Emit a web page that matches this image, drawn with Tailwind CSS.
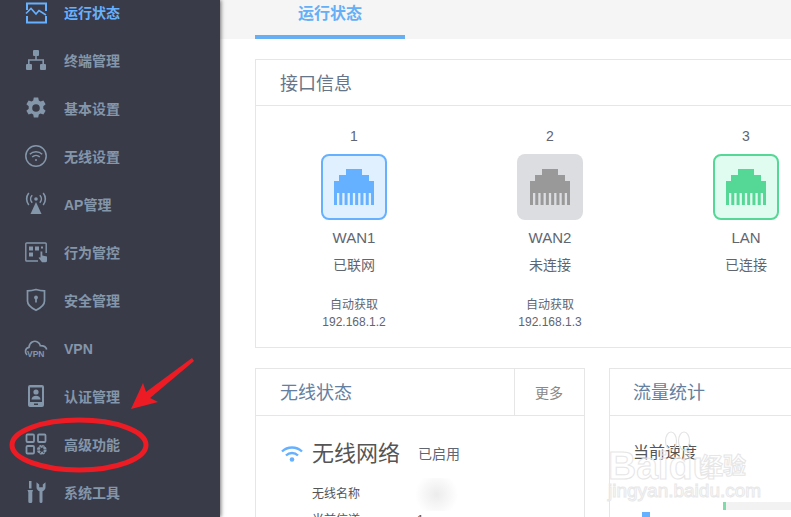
<!DOCTYPE html>
<html lang="zh-CN">
<head>
  <meta charset="UTF-8" />
  <title>运行状态</title>
  <script src="https://cdn.jsdelivr.net/npm/@tailwindcss/browser@4"></script>
</head>
<body class="font-['Liberation_Sans','Noto_Sans_CJK_SC',sans-serif] bg-white">
  <div class="relative flex w-[791px] h-[517px] overflow-hidden">

    <!-- sidebar -->
    <aside class="relative z-10 w-[220px] h-full shrink-0 bg-[#3a3b48] shadow-[1px_0_4px_rgba(0,0,0,0.55)] text-[14px] font-bold text-[#8496aa]">
      <ul class="-mt-[12px]">
        <li class="flex items-center h-[48px] pl-[24px] gap-[16px] text-[#66b1ff]">
          <svg class="w-[24px] h-[24px] overflow-visible" viewBox="0 0 24 24" fill="none" stroke="currentColor" stroke-width="2"><path d="M3 10V3.500h19V11M3 16v6.500h19V16"/><path d="M2 13.500l5-5 5 5.500 3-3.500 7 4.500" stroke-width="1.600"/></svg>
          <span class="pt-[2px]">运行状态</span>
        </li>
        <li class="flex items-center h-[48px] pl-[24px] gap-[16px]">
          <svg class="w-[24px] h-[24px]" viewBox="0 0 24 24" fill="currentColor"><rect x="9" y="2" width="6" height="6" rx="1"/><rect x="2" y="16" width="6" height="6" rx="1"/><rect x="16" y="16" width="6" height="6" rx="1"/><path d="M11.200 8h1.600v3.200H20V16h-1.600v-3.200H5.600V16H4v-4.800h7.200z"/></svg>
          <span class="pt-[2px]">终端管理</span>
        </li>
        <li class="flex items-center h-[48px] pl-[24px] gap-[16px]">
          <svg class="w-[24px] h-[24px]" viewBox="0 0 24 24" fill="currentColor"><path fill-rule="evenodd" d="M9.800 1.500h4.400l.6 3 1.700 1 2.900-1 2.200 3.800-2.300 2v2.400l2.300 2-2.200 3.800-2.900-1-1.700 1-.6 3H9.800l-.6-3-1.700-1-2.900 1-2.200-3.800 2.300-2v-2.400l-2.300-2 2.200-3.800 2.900 1 1.700-1zM12 8.200a3.800 3.800 0 1 0 0 7.600 3.800 3.800 0 0 0 0-7.600z"/></svg>
          <span class="pt-[2px]">基本设置</span>
        </li>
        <li class="flex items-center h-[48px] pl-[24px] gap-[16px]">
          <svg class="w-[24px] h-[24px]" viewBox="0 0 24 24" fill="none" stroke="currentColor" stroke-width="1.500"><circle cx="12" cy="12" r="10.200"/><path d="M5.800 10.200a9 9 0 0 1 12.400 0M8.200 13a5.600 5.600 0 0 1 7.600 0"/><circle cx="12" cy="16" r="1" fill="currentColor" stroke="none"/></svg>
          <span class="pt-[2px]">无线设置</span>
        </li>
        <li class="flex items-center h-[48px] pl-[24px] gap-[16px]">
          <svg class="w-[24px] h-[24px]" viewBox="0 0 24 24" fill="currentColor"><path d="M12 10l5.500 12h-11z"/><circle cx="12" cy="7" r="1.800"/><path d="M8.200 3.200a5.500 5.500 0 0 0 0 7.600M15.800 3.200a5.500 5.500 0 0 1 0 7.600M4.800 1a9.500 9.500 0 0 0 0 12M19.200 1a9.500 9.500 0 0 1 0 12" fill="none" stroke="currentColor" stroke-width="1.600"/></svg>
          <span class="pt-[2px]">AP管理</span>
        </li>
        <li class="flex items-center h-[48px] pl-[24px] gap-[16px]">
          <svg class="w-[24px] h-[24px]" viewBox="0 0 24 24" fill="currentColor"><path d="M14 21H2.600a.8.8 0 0 1-.8-.8V3.800a.8.8 0 0 1 .8-.8h18.800a.8.8 0 0 1 .8.8V13" fill="none" stroke="currentColor" stroke-width="1.400"/><rect x="5" y="6.500" width="4" height="4"/><rect x="11" y="6.500" width="4" height="4"/><rect x="5" y="12.500" width="4" height="4"/><rect x="17" y="6.500" width="2" height="2"/><path d="M16.500 11.500h1.800v4l4.700.9v4.400a1.500 1.500 0 0 1-1.500 1.500h-3.500l-3.500-4.500 1.500-.6.500.6z"/></svg>
          <span class="pt-[2px]">行为管控</span>
        </li>
        <li class="flex items-center h-[48px] pl-[24px] gap-[16px]">
          <svg class="w-[24px] h-[24px]" viewBox="0 0 24 24" fill="none" stroke="currentColor" stroke-width="1.700"><path d="M12 1.500c3.200 1 6 1.400 8.500 1.400v10.100c0 4-3.800 7-8.500 9.200-4.700-2.200-8.500-5.200-8.500-9.200V2.900c2.500 0 5.300-.4 8.500-1.400z"/><circle cx="12" cy="9.500" r="1.900" fill="currentColor" stroke="none"/><path d="M12 10v4.500"/></svg>
          <span class="pt-[2px]">安全管理</span>
        </li>
        <li class="flex items-center h-[48px] pl-[24px] gap-[16px]">
          <span class="relative w-[24px] h-[24px]">
            <svg class="w-[24px] h-[24px]" viewBox="0 0 24 24" fill="none" stroke="currentColor" stroke-width="1.700"><path d="M3 19C.5 16.500 1 12 5 11.300 5.500 6.500 10 4 13.500 6c1.500.8 2.500 2.200 2.800 3.700 3 0 5.600 1 6.400 3.800"/></svg>
            <span class="absolute left-[3px] top-[13px] text-[8.500px] leading-[10px] font-bold">VPN</span>
          </span>
          <span class="pt-[2px]">VPN</span>
        </li>
        <li class="flex items-center h-[48px] pl-[24px] gap-[16px]">
          <svg class="w-[24px] h-[24px]" viewBox="0 0 24 24" fill="currentColor"><path fill-rule="evenodd" d="M6 1h12a2 2 0 0 1 2 2v18a2 2 0 0 1-2 2H6a2 2 0 0 1-2-2V3a2 2 0 0 1 2-2zm0 2.500v14.500h12V3.500zM10 19.500v1.600h4v-1.600z"/><circle cx="12" cy="8" r="2.600"/><path d="M7.500 15.500c0-2.500 2-3.800 4.500-3.800s4.500 1.300 4.500 3.800z"/></svg>
          <span class="pt-[2px]">认证管理</span>
        </li>
        <li class="flex items-center h-[48px] pl-[24px] gap-[16px]">
          <svg class="w-[24px] h-[24px]" viewBox="0 0 24 24" fill="none" stroke="currentColor" stroke-width="1.800"><rect x="2.500" y="2.500" width="7.500" height="7.500" rx="1"/><rect x="14" y="2.500" width="7.500" height="7.500" rx="1"/><rect x="2.500" y="14" width="7.500" height="7.500" rx="1"/><circle cx="17.800" cy="17.800" r="3.200" stroke-width="2.400" stroke-dasharray="2.500 .8"/><circle cx="17.800" cy="17.800" r="4.200" stroke-width="1.200" stroke-dasharray="2 1.300"/></svg>
          <span class="pt-[2px]">高级功能</span>
        </li>
        <li class="flex items-center h-[48px] pl-[24px] gap-[16px]">
          <svg class="w-[24px] h-[24px]" viewBox="0 0 24 24" fill="currentColor"><path d="M5 1h2.500v7.500H5zM3.500 10h5.500l-.7 2.200v9.300a1.500 1.500 0 0 1-1.500 1.500h-1a1.500 1.500 0 0 1-1.500-1.500v-9.300z"/><path d="M12.500 2.200v5c0 2 1.500 3.500 3 4v10.300a1.500 1.500 0 0 0 3 0V11.200c1.500-.5 3-2 3-4v-5l-2.700 2.300v2.700h-3.600V4.500z"/></svg>
          <span class="pt-[2px]">系统工具</span>
        </li>
      </ul>
    </aside>

    <!-- main -->
    <main class="flex-1 min-w-0">
      <div class="h-[39px] bg-[#f5f5f5] pl-[35px]">
        <div class="w-[150px] h-[39px] border-b-4 border-[#66aff5] text-center text-[16px] leading-[27px] font-bold text-[#66aff5]">运行状态</div>
      </div>

      <div class="pl-[35px] pt-[20px] w-[780px]">
        <!-- 接口信息 -->
        <section class="w-[720px] h-[289px] border border-[#e6e6e6]">
          <h2 class="h-[46px] border-b border-[#e6e6e6] pl-[24px] text-[18px] leading-[49px] font-normal text-[#65758a]">接口信息</h2>
          <div class="flex pt-[20px]">
            <div class="flex flex-col items-center w-[196px] text-[#5f6671]">
              <div class="text-[14px] leading-[20px]">1</div>
              <div class="flex items-center justify-center w-[66px] h-[66px] mt-[8px] rounded-lg border-2 border-[#66b1ff] bg-[#e1f0ff]">
                <svg class="w-[40px] h-[36px]" viewBox="0 0 40 36" fill="#66b1ff"><path d="M12 0H28V6H35V12H40V24H0V12H5V6H12Z"/><path d="M0 30H40" stroke="#66b1ff" stroke-width="12" stroke-dasharray="3 2.290"/></svg>
              </div>
              <div class="mt-[8px] text-[15px] leading-[20px]">WAN1</div>
              <div class="mt-[7px] text-[14px] leading-[20px]">已联网</div>
              <div class="mt-[22px] text-[12px] leading-[17px]">自动获取</div>
              <div class="text-[12px] leading-[17px]">192.168.1.2</div>
            </div>
            <div class="flex flex-col items-center w-[196px] text-[#5f6671]">
              <div class="text-[14px] leading-[20px]">2</div>
              <div class="flex items-center justify-center w-[66px] h-[66px] mt-[8px] rounded-lg bg-[#dcdde0]">
                <svg class="w-[40px] h-[36px]" viewBox="0 0 40 36" fill="#999999"><path d="M12 0H28V6H35V12H40V24H0V12H5V6H12Z"/><path d="M0 30H40" stroke="#999999" stroke-width="12" stroke-dasharray="3 2.290"/></svg>
              </div>
              <div class="mt-[8px] text-[15px] leading-[20px]">WAN2</div>
              <div class="mt-[7px] text-[14px] leading-[20px]">未连接</div>
              <div class="mt-[22px] text-[12px] leading-[17px]">自动获取</div>
              <div class="text-[12px] leading-[17px]">192.168.1.3</div>
            </div>
            <div class="flex flex-col items-center w-[196px] text-[#5f6671]">
              <div class="text-[14px] leading-[20px]">3</div>
              <div class="flex items-center justify-center w-[66px] h-[66px] mt-[8px] rounded-lg border-2 border-[#55d795] bg-[#e0fbf0]">
                <svg class="w-[40px] h-[36px]" viewBox="0 0 40 36" fill="#55d795"><path d="M12 0H28V6H35V12H40V24H0V12H5V6H12Z"/><path d="M0 30H40" stroke="#55d795" stroke-width="12" stroke-dasharray="3 2.290"/></svg>
              </div>
              <div class="mt-[8px] text-[15px] leading-[20px]">LAN</div>
              <div class="mt-[7px] text-[14px] leading-[20px]">已连接</div>
            </div>
          </div>
        </section>

        <div class="flex gap-[24px] mt-[20px]">
          <!-- 无线状态 -->
          <section class="w-[330px] h-[300px] shrink-0 border border-[#e6e6e6]">
            <div class="flex h-[47px] border-b border-[#e6e6e6]">
              <h2 class="flex-1 pl-[24px] text-[18px] leading-[49px] font-normal text-[#65809f]">无线状态</h2>
              <div class="w-[70px] border-l border-[#e6e6e6] pl-[20px] text-[14px] leading-[48px] text-[#888888]">更多</div>
            </div>
            <div class="flex items-center pl-[25px] pt-[22px]">
              <svg class="w-[22px] h-[16px]" viewBox="0 0 22 16" fill="none" stroke="#66b1ff" stroke-width="2.400"><path d="M1 5.500a14.500 14.500 0 0 1 20 0M5 9.500a8.500 8.500 0 0 1 12 0"/><circle cx="11" cy="13.500" r="2.300" fill="#66b1ff" stroke="none"/></svg>
              <span class="ml-[9px] text-[22px] leading-[32px] text-[#555555]">无线网络</span>
              <span class="ml-[18px] text-[14px] leading-[20px] text-[#5f6671]">已启用</span>
            </div>
            <div class="flex items-center mt-[16px] pl-[56px] h-[17px]">
              <span class="w-[101px] text-[12px] leading-[17px] text-[#555555]">无线名称</span>
              <span class="w-[47px] h-[33px] bg-[radial-gradient(circle,#ececec,#ffffff_75%)]"></span>
            </div>
            <div class="flex mt-[9px] pl-[56px] text-[12px] leading-[17px] text-[#555555]">
              <span class="w-[105px]">当前信道</span>
              <span>1</span>
            </div>
          </section>

          <!-- 流量统计 -->
          <section class="w-[330px] h-[300px] shrink-0 border border-[#e6e6e6]">
            <h2 class="h-[47px] border-b border-[#e6e6e6] pl-[23px] text-[18px] leading-[49px] font-normal text-[#65809f]">流量统计</h2>
            <div class="pl-[23px] pt-[25px] text-[16px] leading-[24px] text-[#555555]">当前速度</div>
            <div class="relative h-[30px] mt-[37px]">
              <div class="absolute left-[32px] top-[10px] w-[8px] h-[10px] bg-[#66b1ff]"></div>
              <div class="absolute left-[113px] top-0 w-[3px] h-[8px] bg-[#7fdcaa]"></div>
              <div class="absolute left-[116px] top-0 w-[200px] h-[8px] bg-[#f2f2f2]"></div>
            </div>
          </section>
        </div>
      </div>
    </main>

    <!-- 水印 -->
    <div class="absolute left-[606px] top-[428px] z-20 w-[150px] h-[80px] pointer-events-none">
      <svg class="absolute left-[58px] top-[3px] w-[28px] h-[22px]" viewBox="0 0 28 22" fill="none" stroke="#e4e4e4" stroke-width="1.200"><ellipse cx="7" cy="10" rx="5.500" ry="9"/><ellipse cx="20" cy="10" rx="5.500" ry="9"/></svg>
      <span class="absolute left-[2px] top-[16px] text-[39px] leading-[44px] font-bold text-white/40 [-webkit-text-stroke:1px_#e6e6e6]">Baidu</span>
      <span class="absolute left-[94px] top-[23px] text-[23px] leading-[30px] font-bold text-white/40 [-webkit-text-stroke:1px_#e6e6e6]">经验</span>
      <span class="absolute left-[2px] top-[53px] text-[19px] leading-[20px] whitespace-nowrap text-white/40 [-webkit-text-stroke:1px_#e8e8e8]">jingyan.baidu.com</span>
    </div>

    <!-- 红色标注 -->
    <svg class="absolute left-0 top-0 z-30 w-[791px] h-[517px] pointer-events-none" viewBox="0 0 791 517">
      <ellipse cx="79" cy="445" rx="67" ry="25" fill="none" stroke="#ed1c24" stroke-width="5"/>
      <path d="M131 409L143 383L146 392L192 358L194 361L150 398L158 402Z" fill="#ed1c24"/>
    </svg>
  </div>
</body>
</html>
